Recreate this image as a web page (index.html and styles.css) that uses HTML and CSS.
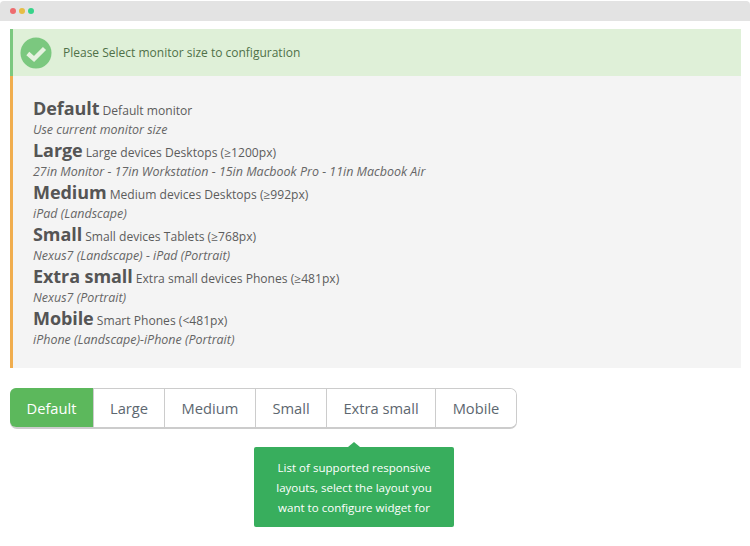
FILE: index.html
```html
<!DOCTYPE html>
<html lang="en">
<head>
<meta charset="utf-8">
<title>Layouts</title>
<link rel="stylesheet" href="styles.css">
</head>
<body>
<div class="chrome"><i class="dot red"></i><i class="dot yellow"></i><i class="dot green"></i></div>
<main class="content">
  <div class="alert">
    <svg class="check" width="32" height="32" viewBox="0 0 32 32"><circle cx="16" cy="16" r="15.5" fill="#7bc87f"/><path d="M7.8 16.5L14 22L24.5 11.5" fill="none" stroke="#e6f2e0" stroke-width="4.4"/></svg>
    <span>Please Select monitor size to configuration</span>
  </div>
  <div class="panel">
    <div class="row"><div class="line"><strong>Default</strong> Default monitor</div><em>Use current monitor size</em></div>
    <div class="row"><div class="line"><strong>Large</strong> Large devices Desktops (≥1200px)</div><em>27in Monitor - 17in Workstation - 15in Macbook Pro - 11in Macbook Air</em></div>
    <div class="row"><div class="line"><strong>Medium</strong> Medium devices Desktops (≥992px)</div><em>iPad (Landscape)</em></div>
    <div class="row"><div class="line"><strong>Small</strong> Small devices Tablets (≥768px)</div><em>Nexus7 (Landscape) - iPad (Portrait)</em></div>
    <div class="row"><div class="line"><strong>Extra small</strong> Extra small devices Phones (≥481px)</div><em>Nexus7 (Portrait)</em></div>
    <div class="row"><div class="line"><strong>Mobile</strong> Smart Phones (&lt;481px)</div><em>iPhone (Landscape)-iPhone (Portrait)</em></div>
  </div>
  <div class="tabs">
    <button class="tab active">Default</button>
    <button class="tab">Large</button>
    <button class="tab">Medium</button>
    <button class="tab">Small</button>
    <button class="tab">Extra small</button>
    <button class="tab">Mobile</button>
  </div>
  <div class="tip">List of supported responsive layouts, select the layout you want to configure widget for</div>
</main>
</body>
</html>
```
FILE: styles.css
```css
* { box-sizing: border-box; }
html, body { margin: 0; padding: 0; }
body { width: 750px; height: 546px; overflow: hidden; background: #fff; font-family: "Open Sans", sans-serif; color: #555; }
.chrome { height: 20px; margin-top: 1px; background: #e3e3e3; border-radius: 4px 4px 0 0; display: flex; align-items: center; gap: 3px; padding: 0 0 1px 10px; }
.dot { width: 6px; height: 6px; border-radius: 50%; display: block; }
.red { background: #ee6b6e; }
.yellow { background: #e6bd45; }
.green { background: #37d38a; }
.content { padding: 8px 9px 0 10px; }
.alert { height: 47px; background: #dff0d8; border-left: 3px solid #7bc87f; display: flex; align-items: center; gap: 11px; padding-left: 7px; font-size: 12px; color: #4f7148; }
.check { flex: none; }
.panel { height: 292px; background: #f4f4f4; border-left: 3px solid #f0ad4e; padding: 20px 0 0 20px; }
.row { height: 42px; }
.line { height: 24px; line-height: 24px; font-size: 12.1px; color: #5c5c5c; white-space: nowrap; }
.line strong { font-size: 18px; font-weight: 700; color: #555; letter-spacing: -0.08px; }
.row em { display: block; height: 18px; line-height: 20px; font-size: 12.48px; font-style: italic; color: #666; white-space: nowrap; }
.tabs { display: inline-flex; margin-top: 20px; height: 41px; border: 1px solid #ccc; border-bottom-width: 2px; border-radius: 7px; vertical-align: top; }
.tab { font: 14.7px "Open Sans", sans-serif; color: #5d6770; background: #fff; border: 0; border-left: 1px solid #ccc; padding: 0; margin: 0; text-align: center; }
.tab:nth-child(1) { width: 83px; }
.tab:nth-child(2) { width: 71px; }
.tab:nth-child(3) { width: 91px; }
.tab:nth-child(4) { width: 71px; }
.tab:nth-child(5) { width: 109px; }
.tab:nth-child(6) { width: 81px; }
.tab:first-child { border-left: 0; background: #5cb85c; color: #fff; border-radius: 6px 0 0 6px; margin: -1px 0 0 -1px; height: 39px; padding-top: 1px; }
.tab:last-child { border-radius: 0 6px 6px 0; }
.tip { position: absolute; left: 254px; top: 447px; width: 200px; height: 80px; padding: 11px 10px; background: #38ae5d; color: #fff; font-size: 11.55px; line-height: 20px; text-align: center; border-radius: 2px; }
.tip::before { content: ""; position: absolute; left: 94px; top: -5px; width: 0; height: 0; border: 6px solid transparent; border-top: 0; border-bottom: 5px solid #38ae5d; }
```
